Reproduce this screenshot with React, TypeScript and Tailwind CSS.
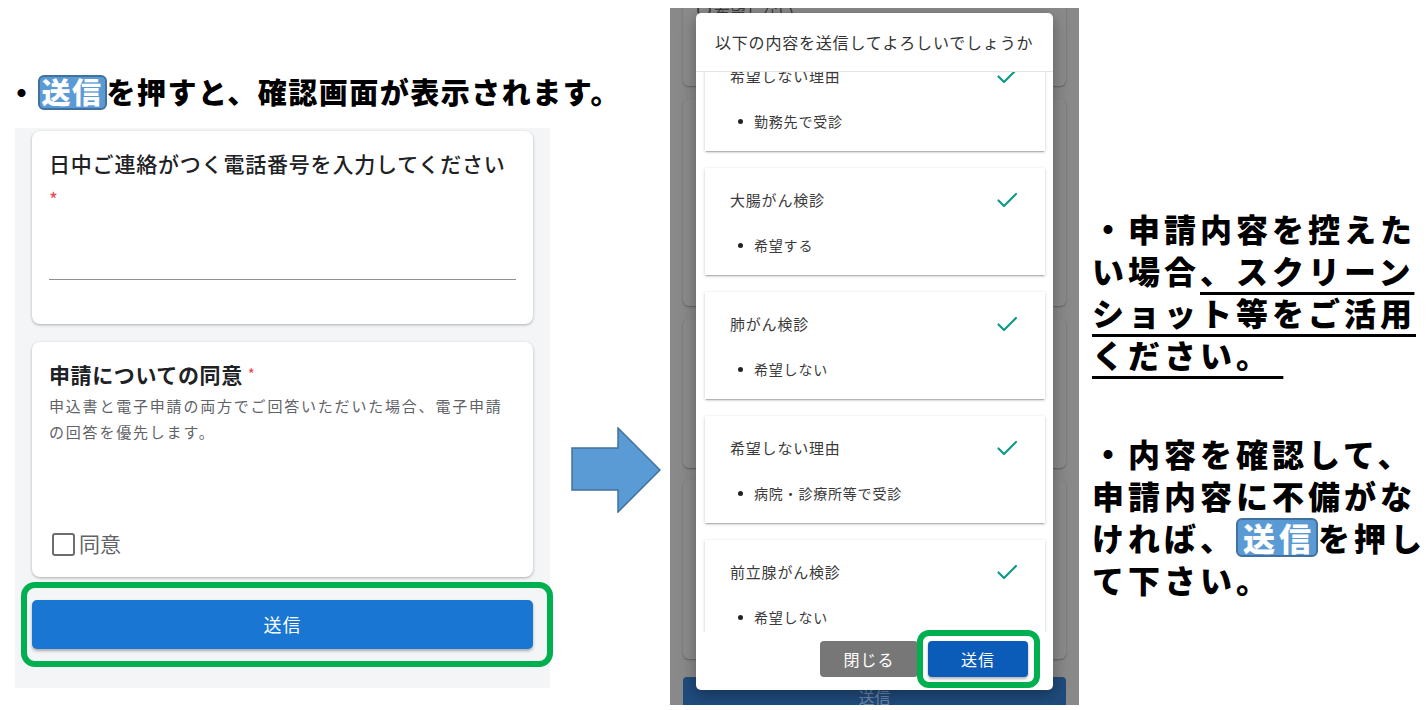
import { Fragment } from "react";

const jp = { fontFamily: '"Noto Sans CJK JP", "Noto Sans", sans-serif' };

const summary = [
  { title: "希望しない理由", value: "勤務先で受診" },
  { title: "大腸がん検診", value: "希望する" },
  { title: "肺がん検診", value: "希望しない" },
  { title: "希望しない理由", value: "病院・診療所等で受診" },
  { title: "前立腺がん検診", value: "希望しない" },
];

function CheckMark() {
  return (
    <svg width="24" height="24" viewBox="0 0 24 24" fill="none">
      <path d="M3.5 12.5l5.5 5.5L21 6" stroke="#0f9a8a" strokeWidth="2.2" strokeLinecap="round" strokeLinejoin="round" />
    </svg>
  );
}

function SendTag({ className }: { className: string }) {
  return (
    <span
      className={`inline-flex items-center justify-center rounded-[6px] border-2 border-[#41719c] bg-[#5b9bd5] text-white ${className}`}
    >
      送信
    </span>
  );
}

export default function App() {
  return (
    <div className="flex h-[710px] w-[1428px] overflow-hidden bg-white text-black" style={jp}>
      {/* left: form screenshot */}
      <div className="ml-[15px] flex w-[538px] shrink-0 flex-col">
        <h2 className="-ml-[8px] mt-[72px] flex h-[40px] items-center whitespace-nowrap text-[29px] font-black tracking-[1.5px] text-black">
          ・<SendTag className="h-[35px] px-[2px]" />を押すと、確認画面が表示されます。
        </h2>
        <div className="relative mt-[16px] h-[560px] w-[535px] bg-[#f4f5f7]">
          <div className="mx-[17px] mt-[3px] flex flex-col">
            <div className="rounded-lg bg-white px-[17px] pt-[18px] pb-[44px] shadow-[0_1px_3px_rgba(0,0,0,0.3)]">
              <div className="text-[21px] leading-[28px] font-medium tracking-[0.8px] text-[#202124]">
                日中ご連絡がつく電話番号を入力してください
              </div>
              <div className="mt-[12px] h-[16px] text-[19px] leading-[20px] text-[#e5484d]">*</div>
              <div className="h-[75px] border-b border-[#8f8f8f]" />
            </div>

            <div className="mt-[18px] rounded-lg bg-white px-[17px] pt-[18px] pb-[21px] shadow-[0_1px_3px_rgba(0,0,0,0.3)]">
              <div className="flex items-center text-[21px] leading-[28px] font-bold tracking-[0.6px] text-[#202124]">
                申請についての同意
                <span className="ml-[5px] text-[15px] font-normal text-[#e5484d]">*</span>
              </div>
              <div className="mt-[5px] whitespace-nowrap text-[15px] leading-[26px] tracking-[1.8px] text-[#5f6368]">
                申込書と電子申請の両方でご回答いただいた場合、電子申請
                <br />
                の回答を優先します。
              </div>
              <div className="mt-[87px] flex h-[24px] items-center gap-[4px]">
                <span className="ml-[3px] h-[23px] w-[23px] rounded-[3px] border-[2.5px] border-[#6d6d6d]" />
                <span className="text-[21px] text-[#5f6368]">同意</span>
              </div>
            </div>

            <button className="mt-[23px] h-[49px] rounded-[5px] bg-[#1976d2] text-[18px] tracking-[1px] text-white shadow-[0_2px_3px_rgba(0,0,0,0.3)]">
              送信
            </button>
          </div>
          <div className="absolute left-[6px] top-[454px] h-[85px] w-[532px] rounded-[14px] border-[6px] border-[#00b050]" />
        </div>
      </div>

      {/* arrow */}
      <div className="w-[117px] shrink-0 pl-[18px] pt-[427px]">
        <svg width="90" height="86" viewBox="0 0 90 86">
          <path d="M1 21h46V1l42 42-42 42V63H1z" fill="#5b9bd5" stroke="#41719c" strokeWidth="1.5" />
        </svg>
      </div>

      {/* right: confirm dialog screenshot */}
      <div className="relative mt-[8px] h-[697px] w-[409px] shrink-0 overflow-hidden bg-[#898989]">
        <div className="mx-[13px] flex flex-col">
          <div className="-mt-[60px] h-[138px] rounded-md bg-[#8b8b8b] pt-[50px] pl-[14px] shadow-[0_1px_2px_rgba(0,0,0,0.3)]">
            <div className="flex h-[24px] items-center gap-[3px] text-[16px] text-[#3a3a3a]">
              <span className="h-[14px] w-[14px] rounded-full border-2 border-[#444]" />
              希望しない
            </div>
          </div>
          <div className="mt-[13px] h-[207px] rounded-md bg-[#8b8b8b] shadow-[0_1px_2px_rgba(0,0,0,0.3)]" />
          <div className="mt-[13px] h-[149px] rounded-md bg-[#8b8b8b] shadow-[0_1px_2px_rgba(0,0,0,0.3)]" />
          <div className="mt-[12px] h-[179px] rounded-md bg-[#8b8b8b] shadow-[0_1px_2px_rgba(0,0,0,0.3)]" />
          <div className="mt-[18px] flex h-[40px] items-center justify-center rounded-[4px] bg-[#1f4b7c] text-[16px] text-[#6f87a6]">
            送信
          </div>
        </div>

        <div className="absolute left-[26px] top-[5px] flex h-[677px] w-[357px] flex-col overflow-hidden rounded-[5px] bg-white shadow-[0_4px_16px_rgba(0,0,0,0.35)]">
          <div className="flex h-[59px] shrink-0 items-center border-b border-[#e4e4e4] pl-[19px] text-[16px] tracking-[0.8px] text-[#333]">
            以下の内容を送信してよろしいでしょうか
          </div>
          <div className="h-[560px] overflow-hidden pl-[9px] pr-[8px]">
            <div className="-mt-[28px] flex flex-col gap-[17px]">
              {summary.map((item, i) => (
                <Fragment key={i}>
                  <div className="h-[107px] shrink-0 bg-white shadow-[0_1px_3px_rgba(0,0,0,0.22),0_2px_1px_-1px_rgba(0,0,0,0.18)]">
                    <div className="flex h-[64px] items-center justify-between pl-[25px] pr-[26px]">
                      <span className="text-[15px] tracking-[0.8px] text-[#3a3a3a]">{item.title}</span>
                      <CheckMark />
                    </div>
                    <div className="flex h-[26px] items-center pl-[33px] text-[14px] tracking-[0.8px] text-[#3a3a3a]">
                      <span className="mr-[11px] h-[5px] w-[5px] rounded-full bg-[#222]" />
                      {item.value}
                    </div>
                  </div>
                </Fragment>
              ))}
            </div>
          </div>
          <div className="flex h-[58px] shrink-0 items-start justify-end gap-[10px] pt-[9px] pr-[25px]">
            <button className="h-[36px] w-[98px] rounded-[4px] bg-[#777] text-[16px] tracking-[1px] text-white">
              閉じる
            </button>
            <button className="h-[36px] w-[100px] rounded-[4px] bg-[#0b5cb8] text-[16px] tracking-[1px] text-white shadow-[0_2px_3px_rgba(0,0,0,0.3)]">
              送信
            </button>
          </div>
        </div>

        <div className="absolute left-[247px] top-[622px] h-[58px] w-[123px] rounded-[12px] border-[6px] border-[#00b050]" />
      </div>

      {/* right: notes */}
      <div className="ml-[13px] w-[336px] shrink-0 whitespace-nowrap pt-[207px] text-[32px] font-black leading-[42px] tracking-[4px] text-black">
        <p>・申請内容を控えた</p>
        <p>
          い場合
          <span className="underline decoration-[3px] underline-offset-[8px]">、スクリーン</span>
        </p>
        <p>
          <span className="underline decoration-[3px] underline-offset-[8px]">ショット等をご活用</span>
        </p>
        <p>
          <span className="underline decoration-[3px] underline-offset-[8px]">ください。&nbsp;</span>
        </p>
        <p className="mt-[57px]">・内容を確認して、</p>
        <p>申請内容に不備がな</p>
        <p className="flex items-center">
          ければ、
          <SendTag className="h-[39px] pl-[5px] pr-[1px]" />
          を押し
        </p>
        <p>て下さい。</p>
      </div>
    </div>
  );
}
